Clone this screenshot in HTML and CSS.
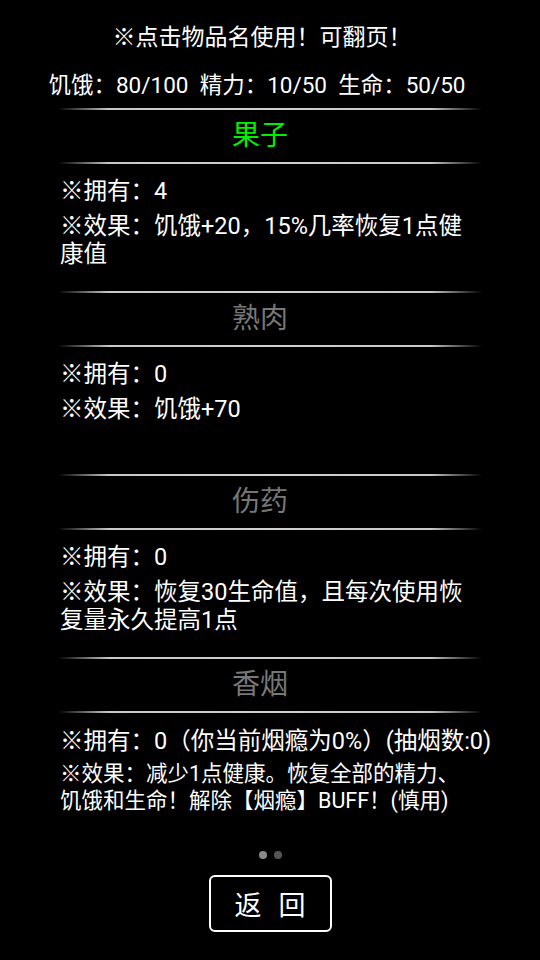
FILE: index.html
```html
<!DOCTYPE html>
<html lang="zh-CN">
<head>
    <meta charset="UTF-8">
    <meta name="viewport" content="width=device-width, initial-scale=1.0">
    <title>物品</title>
    <link rel="stylesheet" href="styles.css">
</head>
<body>
    <div class="page">
        <div class="tip">※点击物品名使用！可翻页！</div>
        <div class="stats">饥饿：80/100&nbsp; 精力：10/50&nbsp; 生命：50/50</div>

        <div class="item-list">
            <div class="divider"></div>
            <div class="item-name active">果子</div>
            <div class="divider"></div>
            <div class="item-body">
                <p>※拥有：4</p>
                <p>※效果：饥饿+20，15%几率恢复1点健<br>康值</p>
            </div>

            <div class="divider"></div>
            <div class="item-name">熟肉</div>
            <div class="divider"></div>
            <div class="item-body">
                <p>※拥有：0</p>
                <p>※效果：饥饿+70</p>
            </div>

            <div class="divider"></div>
            <div class="item-name">伤药</div>
            <div class="divider"></div>
            <div class="item-body">
                <p>※拥有：0</p>
                <p>※效果：恢复30生命值，且每次使用恢<br>复量永久提高1点</p>
            </div>

            <div class="divider"></div>
            <div class="item-name">香烟</div>
            <div class="divider"></div>
            <div class="item-body last">
                <p>※拥有：0（你当前烟瘾为0%）(抽烟数:0)</p>
                <p class="small">※效果：减少1点健康。恢复全部的精力、<br>饥饿和生命！解除【烟瘾】BUFF！(慎用)</p>
            </div>
        </div>

        <div class="pager">
            <span class="dot on"></span>
            <span class="dot"></span>
        </div>

        <button class="back-button">返 回</button>
    </div>
</body>
</html>
```

FILE: styles.css
```css
body {
    margin: 0;
    background-color: #000;
    color: #fff;
    font-family: Roboto, "Noto Sans CJK SC", sans-serif;
}
.page {
    width: 540px;
    height: 960px;
    padding-top: 23px;
    box-sizing: border-box;
    display: flex;
    flex-direction: column;
}
.tip {
    font-size: 23px;
    line-height: 30px;
    text-align: center;
    padding-right: 16px;
}
.stats {
    margin-top: 17px;
    font-size: 22.5px;
    line-height: 30px;
    text-align: center;
    padding-right: 26px;
}
.item-list {
    margin-top: 8px;
}
.divider {
    height: 2px;
    margin: 0 58px;
    background: linear-gradient(to right, rgba(200, 200, 200, 0), #c8c8c8 12%, #d0d0d0 50%, #c8c8c8 88%, rgba(200, 200, 200, 0));
}
.item-name {
    height: 52px;
    line-height: 52px;
    font-size: 28px;
    text-align: center;
    padding-right: 20px;
    color: #777;
}
.item-name.active {
    color: #00f000;
}
.item-body {
    height: 127px;
    box-sizing: border-box;
    padding: 13px 0 0 60px;
}
.item-body.last {
    height: auto;
    padding-top: 14px;
}
.item-body p {
    margin: 0;
    font-size: 23.5px;
    line-height: 28px;
    white-space: nowrap;
}
.item-body p + p {
    margin-top: 7px;
}
.item-body p.small {
    margin-top: 5px;
    font-size: 21.5px;
    line-height: 27px;
}
.pager {
    margin-top: 37px;
    display: flex;
    justify-content: center;
    gap: 7px;
}
.dot {
    width: 8px;
    height: 8px;
    border-radius: 50%;
    background-color: #555;
}
.dot.on {
    background-color: #8a8a8a;
}
.back-button {
    align-self: center;
    margin-top: 16px;
    width: 123px;
    height: 57px;
    border: 2px solid #fff;
    border-radius: 6px;
    background: #000;
    color: #fff;
    font-family: "Noto Sans CJK SC", sans-serif;
    font-size: 27px;
    word-spacing: 11px;
    padding: 0;
}
```
